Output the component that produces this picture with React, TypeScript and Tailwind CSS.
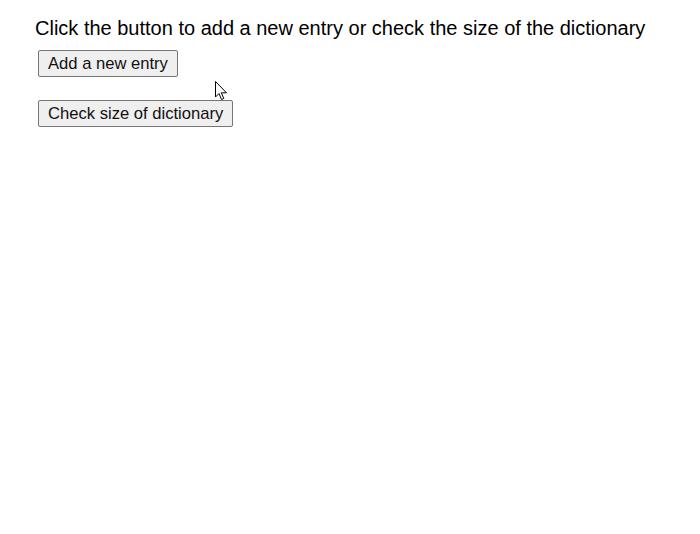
export default function App() {
  return (
    <div className="relative min-h-[534px] bg-white font-['Liberation_Sans',Arial,sans-serif] text-black">
      <div className="pl-[35px] pt-[17px]">
        <p className="text-[20px] leading-[23px]">
          Click the button to add a new entry or check the size of the dictionary
        </p>
        <div className="mt-[10px] flex flex-col items-start gap-[23px] pl-[3px]">
          <button className="rounded-[2px] border border-[#767676] bg-[#efefef] px-[9px] py-[3.5px] text-[16.6px] leading-[18px] text-[#111]">
            Add a new entry
          </button>
          <button className="rounded-[2px] border border-[#767676] bg-[#efefef] px-[9px] py-[3.5px] text-[16.6px] leading-[18px] text-[#111]">
            Check size of dictionary
          </button>
        </div>
      </div>

      {/* mouse pointer */}
      <svg
        className="absolute left-[215px] top-[81px]"
        width="13"
        height="20"
        viewBox="0 0 13 20"
      >
        <path
          d="M0.5 0.5 L0.5 16 L4 12.5 L6.5 18.5 L8.8 17.5 L6.3 11.8 L11.5 11.8 Z"
          fill="white"
          stroke="black"
          strokeWidth="1"
          strokeLinejoin="round"
        />
      </svg>
    </div>
  );
}
